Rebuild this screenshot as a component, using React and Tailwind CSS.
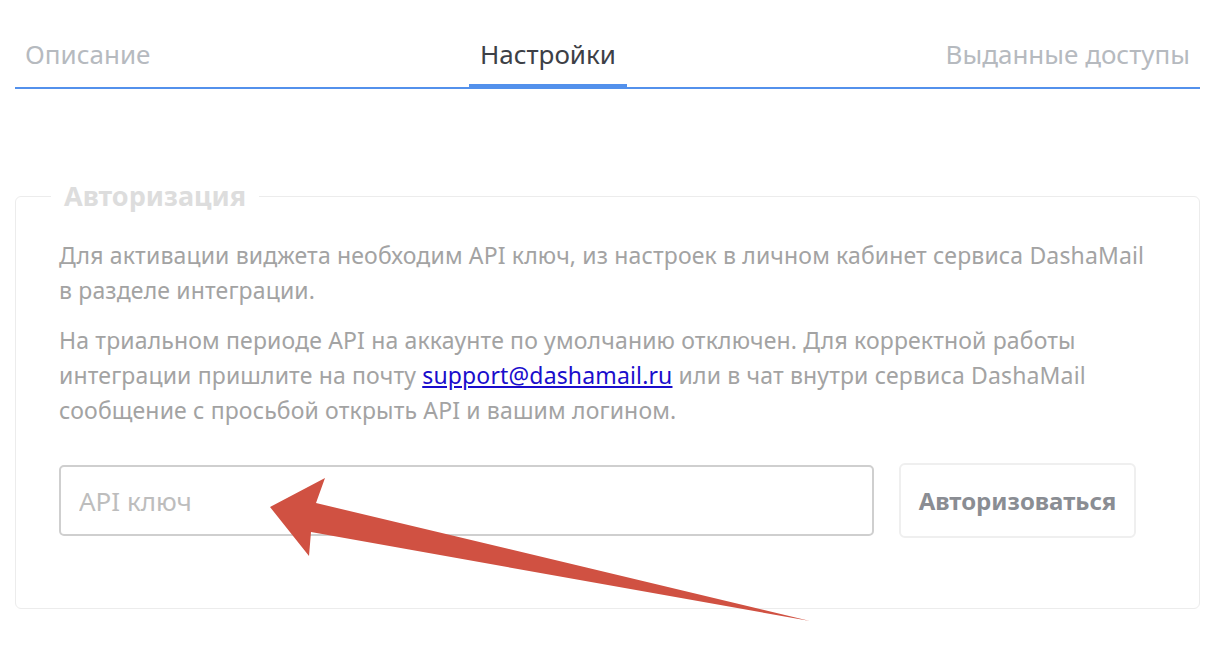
import React from 'react';

const tabs = [
    { label: 'Описание', active: false },
    { label: 'Настройки', active: true },
    { label: 'Выданные доступы', active: false },
];

export default function App() {
    return (
        <div className="relative w-[1216px] h-[669px] bg-white overflow-hidden font-['Noto_Sans',sans-serif]">
            <div className="pl-[15px] pt-[36px] pr-[16px]">
                {/* Tabs */}
                <div className="flex justify-between border-b-2 border-[#5391ec]">
                    {tabs.map((tab) => (
                        <div
                            key={tab.label}
                            className={
                                tab.active
                                    ? 'px-[11px] pb-[12px] -mb-[2px] border-b-[5px] border-[#5391ec] text-[26px] leading-[36px] text-[#3d4046]'
                                    : 'px-[10px] pb-[15px] text-[26px] leading-[36px] text-[#b6babf]'
                            }
                        >
                            {tab.label}
                        </div>
                    ))}
                </div>

                {/* Authorization block */}
                <fieldset className="mt-[89px] border border-[#ececec] rounded-[6px] pl-[43px] pr-[30px] pb-[70px]">
                    <legend className="-ml-[8px] px-[13px] text-[27px] leading-[36px] font-bold text-[#dddddd]">
                        Авторизация
                    </legend>
                    <p className="mt-[24px] text-[23px] leading-[35px] tracking-[0.15px] text-[#a3a3a3] whitespace-nowrap">
                        Для активации виджета необходим API ключ, из настроек в личном кабинет сервиса DashaMail
                        <br />
                        в разделе интеграции.
                    </p>
                    <p className="mt-[15px] text-[23px] leading-[35px] tracking-[0.15px] text-[#a3a3a3] whitespace-nowrap">
                        На триальном периоде API на аккаунте по умолчанию отключен. Для корректной работы
                        <br />
                        интеграции пришлите на почту <a href="#" className="text-[#1a0dcc] underline">support@dashamail.ru</a> или в чат внутри сервиса DashaMail
                        <br />
                        сообщение с просьбой открыть API и вашим логином.
                    </p>
                    <div className="mt-[35px] flex items-center gap-[25px]">
                        <input
                            type="text"
                            placeholder="API ключ"
                            className="w-[815px] h-[71px] border-2 border-[#cfcfcf] rounded-[5px] px-[18px] text-[26px] placeholder:text-[#bdbdbd] outline-none"
                        />
                        <button
                            type="button"
                            className="w-[237px] h-[75px] border-2 border-[#efefef] rounded-[6px] text-[24px] font-bold text-[#8a8d93] bg-white"
                        >
                            Авторизоваться
                        </button>
                    </div>
                </fieldset>
            </div>

            {/* Annotation arrow */}
            <svg className="absolute left-0 top-0 pointer-events-none" width="1216" height="669">
                <polygon
                    points="270,507 325,478 316,503 810,621 311,532 309,556"
                    fill="#d05142"
                />
            </svg>
        </div>
    );
}
